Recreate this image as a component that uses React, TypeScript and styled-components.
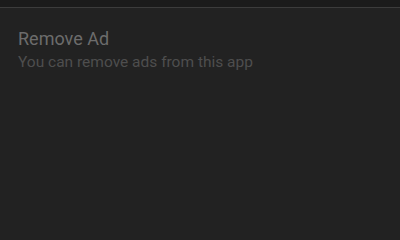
import { createGlobalStyle } from "styled-components";
import styled from "styled-components";

const GlobalStyle = createGlobalStyle`
  html, body {
    margin: 0;
    padding: 0;
    background: #222222;
  }
  #root {
    height: 225px;
  }
`;

const App = () => {
  return (
    <Screen>
      <GlobalStyle />
      <TopBar />
      <SettingRow>
        <Title>Remove Ad</Title>
        <Summary>You can remove ads from this app</Summary>
      </SettingRow>
    </Screen>
  );
};

export default App;

const Screen = styled.div`
  width: 400px;
  height: 225px;
  display: flex;
  flex-direction: column;
  background: #222222;
  font-family: Roboto, "Liberation Sans", sans-serif;
  overflow: hidden;
`;

const TopBar = styled.div`
  height: 7px;
  background: #1b1b1b;
  border-bottom: 1px solid #3c3c3c;
`;

const SettingRow = styled.div`
  display: flex;
  flex-direction: column;
  padding: 20px 18px 0;
  gap: 2px;
`;

const Title = styled.div`
  color: #6c6c6c;
  font-size: 18px;
  line-height: 22px;
`;

const Summary = styled.div`
  color: #4e4e4e;
  font-size: 15.5px;
  line-height: 20px;
`;
